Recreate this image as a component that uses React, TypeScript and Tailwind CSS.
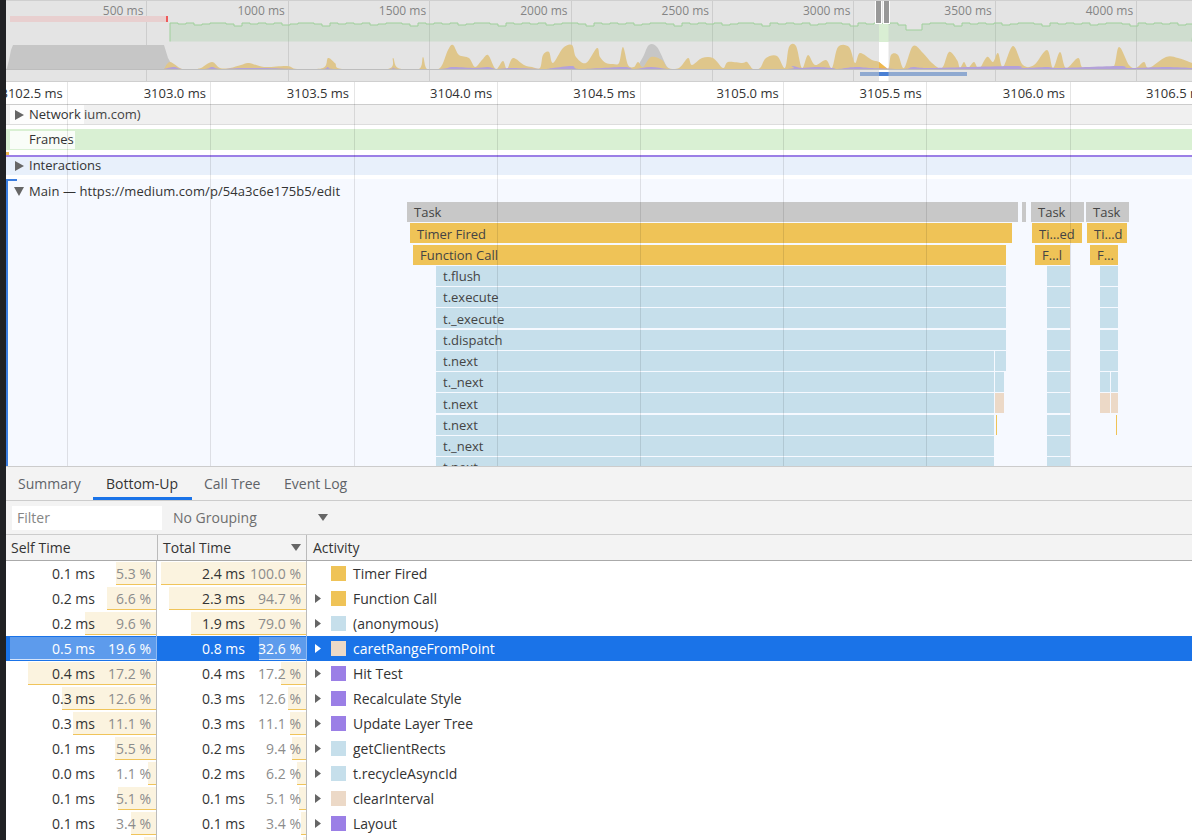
const overviewLabels = ["500 ms", "1000 ms", "1500 ms", "2000 ms", "2500 ms", "3000 ms", "3500 ms", "4000 ms", ""];
const rulerLabels = ["3102.5 ms", "3103.0 ms", "3103.5 ms", "3104.0 ms", "3104.5 ms", "3105.0 ms", "3105.5 ms", "3106.0 ms", "3106.5 ms"];

// cpu chart outline, [x, y] in page pixels
const scripting = [
  [164, 69], [170, 62], [182, 69], [195, 69], [201, 68], [212, 62], [220, 68], [230, 68], [241, 65], [249, 63], [264, 67], [287, 66], [297, 69],
  [323, 68], [328, 58], [335, 63], [342, 69], [388, 69], [393, 58], [398, 68], [419, 69], [423, 57], [427, 69], [440, 68], [448, 50], [453, 45],
  [459, 55], [469, 58], [475, 67], [482, 60], [488, 55], [494, 67], [497, 69], [503, 61], [507, 69], [513, 58], [524, 65], [532, 67], [540, 68],
  [543, 55], [549, 52], [553, 63], [563, 48], [572, 45], [576, 57], [586, 63], [597, 48], [600, 57], [606, 63], [613, 64], [619, 63], [623, 47],
  [628, 65], [634, 67], [638, 62], [643, 67], [651, 57], [662, 60], [668, 68], [679, 68], [688, 58], [692, 65], [702, 58], [713, 58], [723, 68],
  [728, 62], [742, 63], [747, 62], [753, 69], [760, 68], [766, 58], [777, 56], [785, 68], [789, 47], [796, 46], [802, 68], [808, 55], [815, 65],
  [826, 60], [832, 68], [838, 47], [849, 47], [855, 63], [860, 53], [872, 60], [879, 62], [888, 69], [891, 55], [898, 55], [904, 68], [913, 46],
  [923, 53], [932, 63], [942, 68], [949, 52], [957, 60], [960, 68], [964, 62], [968, 68], [974, 62], [979, 69], [987, 57], [993, 62], [998, 53],
  [1003, 67], [1013, 46], [1023, 65], [1034, 65], [1047, 50], [1053, 68], [1060, 52], [1066, 68], [1078, 58], [1083, 68], [1098, 67], [1113, 68],
  [1119, 47], [1129, 65], [1136, 68], [1144, 62], [1149, 68], [1166, 57], [1178, 58], [1192, 63],
];
const idle = "6,69.5 7,68 9,60 11,50 13,45 164,45 168,58 172,65 180,69.5";
const idleBump = [[636, 69], [643, 57], [649, 45], [657, 47], [666, 65], [670, 69]];
const rendering = [
  [164, 69], [174, 67], [182, 69], [205, 69], [212, 67], [220, 69], [241, 68], [264, 68], [297, 69], [323, 69], [328, 67], [335, 69], [388, 69],
  [393, 67], [398, 69], [440, 69], [453, 67], [475, 68], [488, 67], [497, 69], [513, 68], [543, 69], [553, 68], [572, 66], [580, 69], [623, 67],
  [634, 69], [651, 67], [668, 69], [692, 69], [785, 69], [792, 66], [802, 68], [815, 67], [832, 68], [838, 69], [855, 67], [872, 68], [904, 69],
  [913, 67], [932, 68], [1013, 66], [1023, 68], [1047, 67], [1060, 68], [1119, 66], [1129, 68], [1166, 67], [1192, 68],
];
const toPoints = (pts: number[][]) => pts.map((p) => p.join(",")).join(" ");

// closes a catmull-rom curve through the points down to the baseline
const area = (pts: number[][]) => {
  let d = `M${pts[0][0]} 69.5L${pts[0][0]} ${pts[0][1]}`;
  for (let i = 0; i < pts.length - 1; i++) {
    const p0 = pts[Math.max(i - 1, 0)];
    const p1 = pts[i];
    const p2 = pts[i + 1];
    const p3 = pts[Math.min(i + 2, pts.length - 1)];
    d += `C${p1[0] + (p2[0] - p0[0]) / 6} ${p1[1] + (p2[1] - p0[1]) / 6} ${p2[0] - (p3[0] - p1[0]) / 6} ${p2[1] - (p3[1] - p1[1]) / 6} ${p2[0]} ${p2[1]}`;
  }
  return `${d}L${pts[pts.length - 1][0]} 69.5Z`;
};

// fps steps
const dips: Record<number, number> = { 380: 27, 416: 28, 452: 26, 488: 29, 560: 33, 568: 33, 646: 33, 654: 33, 789: 33, 797: 33, 838: 32, 846: 32, 862: 29, 870: 30, 906: 30, 914: 30 };
const pattern = [23, 24, 23, 25, 24, 23, 23, 24, 26, 23, 24];
const fpsPoints = () => {
  const pts: number[][] = [[170, 41.5], [170, 23]];
  let i = 0;
  for (let x = 170; x < 1192; x += 8) {
    const y = dips[x] ?? pattern[i++ % pattern.length];
    pts.push([x, y], [x + 8, y]);
  }
  pts.push([1192, 41.5]);
  return toPoints(pts);
};

type Flame = { left: number; width: number; label?: string; kind: "task" | "timer" | "js" | "paint" | "mark" };
const BLUE2 = { left: 1047, width: 23, kind: "js" as const };
const flameRows: Flame[][] = [
  [{ left: 407, width: 611, label: "Task", kind: "task" }, { left: 1022, width: 4, kind: "task" }, { left: 1031, width: 53, label: "Task", kind: "task" }, { left: 1086, width: 43, label: "Task", kind: "task" }],
  [{ left: 410, width: 602, label: "Timer Fired", kind: "timer" }, { left: 1032, width: 50, label: "Ti…ed", kind: "timer" }, { left: 1087, width: 40, label: "Ti…d", kind: "timer" }],
  [{ left: 413, width: 593, label: "Function Call", kind: "timer" }, { left: 1035, width: 35, label: "F…l", kind: "timer" }, { left: 1090, width: 28, label: "F…", kind: "timer" }],
  [{ left: 436, width: 570, label: "t.flush", kind: "js" }, BLUE2, { left: 1100, width: 18, kind: "js" }],
  [{ left: 436, width: 570, label: "t.execute", kind: "js" }, BLUE2, { left: 1100, width: 18, kind: "js" }],
  [{ left: 436, width: 570, label: "t._execute", kind: "js" }, BLUE2, { left: 1100, width: 18, kind: "js" }],
  [{ left: 436, width: 570, label: "t.dispatch", kind: "js" }, BLUE2, { left: 1100, width: 18, kind: "js" }],
  [{ left: 436, width: 558, label: "t.next", kind: "js" }, { left: 995, width: 11, kind: "js" }, BLUE2, { left: 1100, width: 18, kind: "js" }],
  [{ left: 436, width: 558, label: "t._next", kind: "js" }, { left: 995, width: 9, kind: "js" }, BLUE2, { left: 1100, width: 10, kind: "js" }, { left: 1111, width: 7, kind: "js" }],
  [{ left: 436, width: 558, label: "t.next", kind: "js" }, { left: 995, width: 9, kind: "paint" }, BLUE2, { left: 1100, width: 10, kind: "paint" }, { left: 1111, width: 7, kind: "paint" }],
  [{ left: 436, width: 558, label: "t.next", kind: "js" }, { left: 996, width: 1, kind: "mark" }, BLUE2, { left: 1116, width: 1, kind: "mark" }],
  [{ left: 436, width: 558, label: "t._next", kind: "js" }, BLUE2],
  [{ left: 436, width: 558, label: "t.next", kind: "js" }, BLUE2],
];
const flameColor = {
  task: "bg-[#c8c8c8] text-[#444]",
  timer: "bg-[#efc357] text-[#444]",
  js: "bg-[#c6dfeb] text-[#444]",
  paint: "bg-[#ecd9c7] text-[#444]",
  mark: "bg-[#efc357]",
};

type Row = { self: string; selfPct: string; selfBar: number; total: string; totalPct: string; totalBar: number; name: string; color: string; arrow: boolean };
const rows: Row[] = [
  { self: "0.1 ms", selfPct: "5.3 %", selfBar: 40, total: "2.4 ms", totalPct: "100.0 %", totalBar: 145, name: "Timer Fired", color: "bg-[#efc357]", arrow: false },
  { self: "0.2 ms", selfPct: "6.6 %", selfBar: 49, total: "2.3 ms", totalPct: "94.7 %", totalBar: 137, name: "Function Call", color: "bg-[#efc357]", arrow: true },
  { self: "0.2 ms", selfPct: "9.6 %", selfBar: 71, total: "1.9 ms", totalPct: "79.0 %", totalBar: 115, name: "(anonymous)", color: "bg-[#c6dfeb]", arrow: true },
  { self: "0.5 ms", selfPct: "19.6 %", selfBar: 146, total: "0.8 ms", totalPct: "32.6 %", totalBar: 47, name: "caretRangeFromPoint", color: "bg-[#ecd9c7]", arrow: true },
  { self: "0.4 ms", selfPct: "17.2 %", selfBar: 128, total: "0.4 ms", totalPct: "17.2 %", totalBar: 25, name: "Hit Test", color: "bg-[#9b7fe6]", arrow: true },
  { self: "0.3 ms", selfPct: "12.6 %", selfBar: 94, total: "0.3 ms", totalPct: "12.6 %", totalBar: 18, name: "Recalculate Style", color: "bg-[#9b7fe6]", arrow: true },
  { self: "0.3 ms", selfPct: "11.1 %", selfBar: 83, total: "0.3 ms", totalPct: "11.1 %", totalBar: 16, name: "Update Layer Tree", color: "bg-[#9b7fe6]", arrow: true },
  { self: "0.1 ms", selfPct: "5.5 %", selfBar: 41, total: "0.2 ms", totalPct: "9.4 %", totalBar: 14, name: "getClientRects", color: "bg-[#c6dfeb]", arrow: true },
  { self: "0.0 ms", selfPct: "1.1 %", selfBar: 8, total: "0.2 ms", totalPct: "6.2 %", totalBar: 9, name: "t.recycleAsyncId", color: "bg-[#c6dfeb]", arrow: true },
  { self: "0.1 ms", selfPct: "5.1 %", selfBar: 38, total: "0.1 ms", totalPct: "5.1 %", totalBar: 7, name: "clearInterval", color: "bg-[#ecd9c7]", arrow: true },
  { self: "0.1 ms", selfPct: "3.4 %", selfBar: 25, total: "0.1 ms", totalPct: "3.4 %", totalBar: 5, name: "Layout", color: "bg-[#9b7fe6]", arrow: true },
  { self: "", selfPct: "", selfBar: 12, total: "", totalPct: "", totalBar: 3, name: "", color: "", arrow: false },
];

const Tri = ({ dir, className }: { dir: "right" | "down"; className: string }) => (
  <svg viewBox="0 0 10 10" preserveAspectRatio="none" className={className}>
    <path d={dir === "right" ? "M0 0L10 5L0 10Z" : "M0 0L10 0L5 10Z"} fill="currentColor" />
  </svg>
);

function Overview() {
  return (
    <div className="relative h-[82px] shrink-0 overflow-hidden border-t border-b border-[#cfcfcf] bg-[#e4e4e4]">
      <div className="flex h-full">
        {overviewLabels.map((l, i) => (
          <div key={i} className="flex h-full w-[141.4px] shrink-0 justify-end border-r border-[#cdcdcd] pr-[3px] pt-[1px] text-[12px] text-[#848484]">
            {l}
          </div>
        ))}
      </div>
      <svg viewBox="6 1 1186 82" className="absolute left-0 top-0 h-[82px] w-[1186px]">
        <clipPath id="cpu">
          <rect x="6" y="40" width="1186" height="29.5" />
        </clipPath>
        <rect x="10" y="16" width="156" height="6" fill="#e8cfcf" />
        <rect x="166" y="16" width="2" height="6" fill="#ee5a5a" />
        <polygon points={fpsPoints()} fill="#8fc98f" fillOpacity="0.25" stroke="none" />
        <polyline points={fpsPoints()} fill="none" stroke="#9fd09b" strokeWidth="1" />
        <rect x="879" y="24" width="9.5" height="18" fill="#d9eed3" />
        <rect x="879" y="42" width="9.5" height="41" fill="#ffffff" />
        <g clipPath="url(#cpu)">
          <polygon points={idle} fill="#c6c6c6" />
          <path d={area(idleBump)} fill="#c6c6c6" />
          <path d={area(scripting)} fill="#dfc68b" />
          <polygon points="879,62 888,69 879,69" fill="#efb94f" />
          <path d={area(rendering)} fill="#b3a1d9" />
        </g>
        <line x1="6" x2="1192" y1="69.5" y2="69.5" stroke="#bdbdbd" strokeWidth="1" />
        <rect x="860" y="72" width="107" height="4" fill="#8fa9d0" />
        <rect x="879" y="72" width="9.5" height="4" fill="#4a80d4" />
      </svg>
      <div className="absolute -top-px left-[869px] flex h-[24px] gap-[1px]">
        <div className="w-[7px] border-x border-b border-white bg-[#999]" />
        <div className="w-[7px] border-x border-b border-white bg-[#999]" />
      </div>
    </div>
  );
}

function Tracks() {
  return (
    <div className="relative flex min-h-0 flex-1 flex-col">
      <div className="flex h-[23px] shrink-0 border-b border-[#cccccc] bg-white">
        {rulerLabels.map((l, i) => (
          <div key={l} className={`flex shrink-0 justify-end overflow-hidden whitespace-nowrap pr-[5px] pt-[2px] text-[13px] text-[#333] ${i === 0 ? "w-[61.7px]" : "w-[143.2px]"}`}>
            {l}
          </div>
        ))}
      </div>

      <div className="flex h-[19px] shrink-0 items-center bg-[#f0f0f0] pl-[4px] text-[13px] text-[#333]">
        <div className="flex h-[19px] w-[74px] items-center bg-white/85 pl-[5px]">
          <Tri dir="right" className="h-[10px] w-[9px] text-[#666]" />
          <span className="ml-[5px]">Network</span>
        </div>
        <span className="text-[#444]">ium.com)</span>
      </div>
      <div className="h-[5px] shrink-0 border-t border-[#dddddd] bg-white" />

      <div className="flex h-[21px] shrink-0 items-center bg-[#d9f0d3] text-[13px] text-[#333]">
        <div className="ml-[4px] flex h-[18px] w-[65px] items-center bg-white/85 pl-[19px]">Frames</div>
      </div>
      <div className="relative h-[5px] shrink-0 bg-white">
        <div className="absolute bottom-0 left-0 h-[3px] w-[3px] bg-[#efb94f]" />
      </div>
      <div className="h-[2px] shrink-0 bg-[#9b7fe6]" />

      <div className="flex h-[18px] shrink-0 items-center bg-[#e8f0fb] pl-[9px] text-[13px] text-[#333]">
        <Tri dir="right" className="h-[10px] w-[9px] text-[#666]" />
        <span className="ml-[5px]">Interactions</span>
      </div>
      <div className="h-[4px] shrink-0 bg-white" />

      <div className="relative min-h-0 flex-1 overflow-hidden bg-[#f6f9ff]">
        <div className="absolute bottom-0 left-0 top-0 w-[2px] bg-[#3a7de0]" />
        <div className="absolute left-0 top-0 h-[2px] w-[11px] bg-[#3a7de0]" />
        <div className="flex h-[23px] items-center pl-[8px] pt-[2px] text-[13px] tracking-[0.07px] text-[#333]">
          <Tri dir="down" className="h-[9px] w-[10px] text-[#666]" />
          <span className="ml-[5px]">Main — https://medium.com/p/54a3c6e175b5/edit</span>
        </div>
        <div>
          {flameRows.map((row, i) => (
            <div key={i} className="relative h-[21.25px]">
              {row.map((f, j) => (
                <div
                  key={j}
                  className={`absolute top-0 flex h-[20px] items-center overflow-hidden whitespace-nowrap pt-[2px] text-[13px] ${f.label ? "pl-[7px]" : ""} ${flameColor[f.kind]}`}
                  style={{ left: f.left - 6, width: f.width }}
                >
                  {f.label}
                </div>
              ))}
            </div>
          ))}
        </div>
      </div>

      {/* time grid over the tracks */}
      <div className="pointer-events-none absolute inset-0 flex">
        {rulerLabels.map((l, i) => (
          <div key={l} className={`h-full shrink-0 border-r border-black/10 ${i === 0 ? "w-[62.2px]" : "w-[143.2px]"}`} />
        ))}
      </div>
    </div>
  );
}

function DetailsHeader() {
  return (
    <>
      <div className="flex h-[35px] shrink-0 border-y border-[#cccccc] bg-[#f3f3f3] text-[14px] text-[#5f6368]">
        <div className="flex w-[87px] items-center pl-[12px]">Summary</div>
        <div className="flex w-[99px] items-center border-b-[3px] border-[#1a73e8] pl-[13px] pt-[3px] text-[#333]">Bottom-Up</div>
        <div className="flex w-[80px] items-center pl-[12px]">Call Tree</div>
        <div className="flex items-center pl-[12px]">Event Log</div>
      </div>
      <div className="flex h-[34px] shrink-0 items-center border-b border-[#cccccc] bg-[#f3f3f3] text-[14px]">
        <div className="ml-[6px] flex h-[24px] w-[150px] items-center bg-white pl-[5px] text-[#858585]">Filter</div>
        <div className="ml-[11px] w-[145px] text-[#6e6e6e]">No Grouping</div>
        <Tri dir="down" className="h-[7px] w-[10px] text-[#666]" />
      </div>
      <div className="flex h-[26px] shrink-0 items-center border-b border-[#aaaaaa] bg-[#f3f3f3] text-[14px] text-[#333]">
        <div className="flex h-full w-[152px] items-center border-r border-[#bbbbbb] pl-[5px]">Self Time</div>
        <div className="flex h-full w-[149px] items-center justify-between border-r border-[#bbbbbb] pl-[5px] pr-[5px]">
          Total Time
          <Tri dir="down" className="h-[7px] w-[10px] text-[#666]" />
        </div>
        <div className="pl-[6px]">Activity</div>
      </div>
    </>
  );
}

function TimeCell({ ms, pct, bar, selected, w }: { ms: string; pct: string; bar: number; selected: boolean; w: string }) {
  return (
    <div className={`relative flex h-full shrink-0 items-center justify-end border-r pr-[5px] ${w} ${selected ? "border-white/50" : "border-[#bbbbbb]"}`}>
      <div
        className={`absolute right-0 top-[1px] h-[23px] border-b ${selected ? "border-[#d5e4fb] bg-[#5d9bec]" : "border-[#f0c45a] bg-[#fbf3df]"}`}
        style={{ width: bar }}
      />
      <span className={`relative ${selected ? "text-white" : "text-[#333]"}`}>{ms}</span>
      <span className={`relative w-[56px] text-right ${selected ? "text-white" : "text-[#8c8c8c]"}`}>{pct}</span>
    </div>
  );
}

export default function App() {
  return (
    <div className="flex h-[840px] w-[1192px] overflow-hidden bg-white font-['Open_Sans',sans-serif]">
      <div className="w-[6px] shrink-0 bg-[#202124]" />
      <div className="flex min-w-0 flex-1 flex-col">
        <Overview />
        <div className="flex h-[384px] shrink-0 flex-col">
          <Tracks />
        </div>
        <DetailsHeader />
        <div className="min-h-0 flex-1 overflow-hidden text-[14px]">
          {rows.map((r, i) => {
            const selected = r.name === "caretRangeFromPoint";
            return (
              <div key={i} className={`flex h-[25px] items-center ${selected ? "bg-[#1a73e8]" : "bg-white"}`}>
                <TimeCell ms={r.self} pct={r.selfPct} bar={r.selfBar} selected={selected} w="w-[151px]" />
                <TimeCell ms={r.total} pct={r.totalPct} bar={r.totalBar} selected={selected} w="w-[150px]" />
                <div className="flex h-full w-[24px] shrink-0 items-center pl-[8px]">
                  {r.arrow && <Tri dir="right" className={`h-[9px] w-[6px] ${selected ? "text-white" : "text-[#666]"}`} />}
                </div>
                {r.color && <div className={`h-[15px] w-[15px] shrink-0 ${r.color}`} />}
                <span className={`ml-[7px] ${selected ? "text-white" : "text-[#333]"}`}>{r.name}</span>
              </div>
            );
          })}
        </div>
      </div>
    </div>
  );
}
